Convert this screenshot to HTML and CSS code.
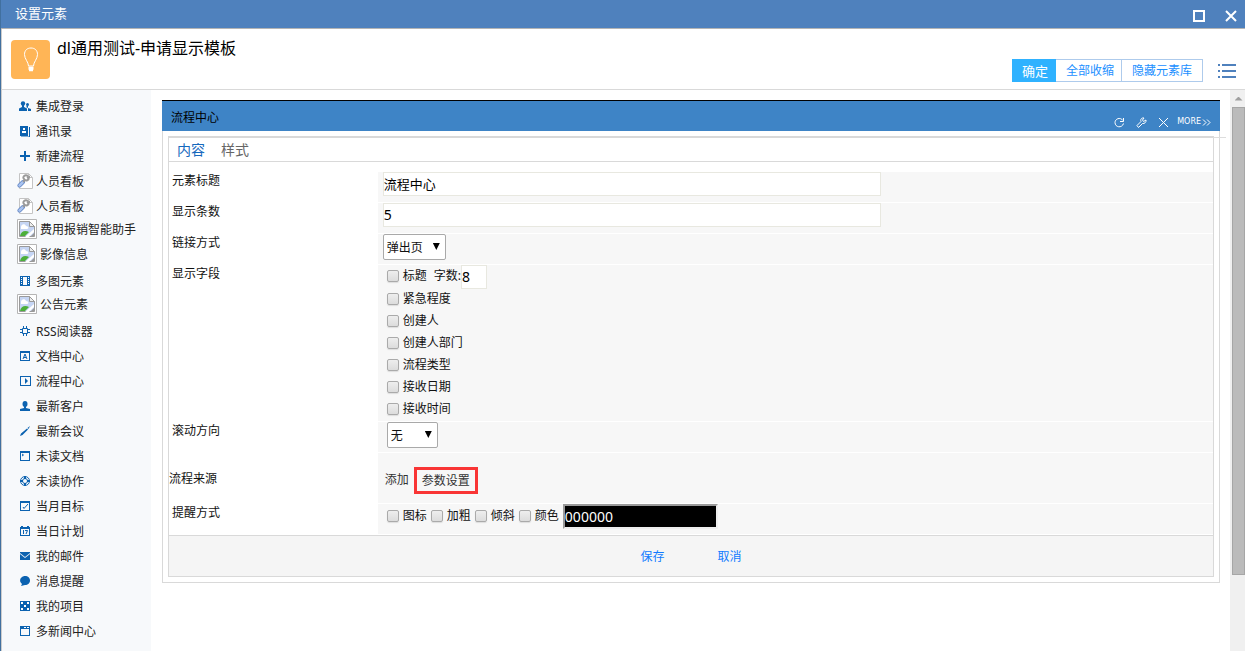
FILE: index.html
```html
<!DOCTYPE html>
<html lang="zh-CN">
<head>
<meta charset="utf-8">
<title>设置元素</title>
<link rel="stylesheet" href="styles.css">
</head>
<body>
<svg class="defs" aria-hidden="true">
  <symbol id="broken" viewBox="0 0 20 20">
    <path fill="#fff" stroke="#b5b5b5" d="M.5.5h19v19H.5z"/>
    <path fill="#c5d5f4" stroke="#9a9a9a" d="M2.500 2.500h10l5 5v10h-15z"/>
    <path fill="#fff" d="M4 8c0-3 4-4 5-1 3 0 3 3 1 3H4z"/>
    <path fill="#4caf3a" d="M3 17c1-5 5-6 9-4l-4 4z"/>
    <path fill="#fff" d="M8 18l9-8v3l-5 5z"/>
    <path fill="#eee" stroke="#999" d="M12.500 2.500v5h5z"/>
    <path fill="#999" d="M14 17l3-3v3z"/>
  </symbol>
  <symbol id="tool" viewBox="0 0 16 16">
    <path fill="#fff" stroke="#c4c4c4" d="M2.500.5h9l4 4v11h-13z"/>
    <path fill="none" stroke="#c4c4c4" d="M11.500.5v4h4"/>
    <path stroke="#5f84c4" stroke-width="4" stroke-linecap="round" d="M2.500 12.500L6 9"/>
    <path stroke="#a9c3f0" stroke-width="2.500" stroke-linecap="round" d="M2.500 12.500L6 9"/>
    <path fill="none" stroke="#9a9a9a" stroke-width="2" d="M6 9l2-2M11 3C8 1 5 4 7 6c2 3 5 1 5-2L10 5"/>
  </symbol>
</svg>
<div class="window">
  <header class="titlebar">
    <h1>设置元素</h1>
    <div class="winbtns">
      <button type="button" aria-label="最大化"><svg width="12" height="12"><path d="M1 1h10v10H1z" fill="none" stroke="#fff" stroke-width="2"/></svg></button>
      <button type="button" aria-label="关闭"><svg width="12" height="12"><path d="M1 1l10 10M11 1L1 11" stroke="#fff" stroke-width="2"/></svg></button>
    </div>
  </header>
  <div class="heading">
    <div class="logo"><svg width="16" height="26" viewBox="0 0 16 26" fill="none" stroke="#fff"><path d="M5.500 19C5.500 15 1.500 12 1.500 7.500C1.500 3.500 4 1 8 1s6.500 2.500 6.500 6.500C14.500 12 10.500 15 10.500 19z"/><path d="M5.500 20.500h5M5.500 22h5M6 23.500h4" stroke-width="1.500"/></svg></div>
    <h2>dl通用测试-申请显示模板</h2>
    <div class="actions">
      <button type="button" class="primary">确定</button><button type="button">全部收缩</button><button type="button">隐藏元素库</button>
    </div>
    <button type="button" class="menu" aria-label="菜单"><svg width="18" height="14" fill="#4f81bd"><path d="M0 0h2v2H0zM4 0h14v2H4zM0 6h2v2H0zM4 6h14v2H4zM0 12h2v2H0zM4 12h14v2H4z"/></svg></button>
  </div>
  <div class="body">
    <nav class="sidebar">
      <a href="#"><svg viewBox="0 0 12 12"><circle cx="4" cy="3.500" r="2.200"/><path d="M3 5h2v2l3 1.500V11H0V8.500L3 7z"/><circle cx="8.500" cy="4.500" r="1.500"/><path d="M8 6h1v2l3 1v2H9V8L7 7z"/></svg>集成登录</a>
      <a href="#"><svg viewBox="0 0 12 12"><path d="M1 1h8v10H1z"/><path d="M10 2h1v10H2v-.5h8z"/><path fill="#fff" d="M4 3h2v2H4zM3 6h4v2H3z"/></svg>通讯录</a>
      <a href="#"><svg viewBox="0 0 12 12"><path d="M5 1h2v4h4v2H7v4H5V7H1V5h4z"/></svg>新建流程</a>
      <a href="#" class="tool"><svg viewBox="0 0 16 16"><use href="#tool"/></svg>人员看板</a>
      <a href="#" class="tool"><svg viewBox="0 0 16 16"><use href="#tool"/></svg>人员看板</a>
      <a href="#" class="broken"><svg viewBox="0 0 20 20"><use href="#broken"/></svg>费用报销智能助手</a>
      <a href="#" class="broken"><svg viewBox="0 0 20 20"><use href="#broken"/></svg>影像信息</a>
      <a href="#"><svg viewBox="0 0 12 12"><path fill-rule="evenodd" d="M1 1h10v10H1zM4 2v8h4V2z"/><path fill="#fff" d="M2 2h1v1H2zM2 4h1v1H2zM2 6h1v1H2zM2 8h1v1H2zM9 2h1v1H9zM9 4h1v1H9zM9 6h1v1H9zM9 8h1v1H9z"/></svg>多图元素</a>
      <a href="#" class="broken"><svg viewBox="0 0 20 20"><use href="#broken"/></svg>公告元素</a>
      <a href="#"><svg viewBox="0 0 12 12"><path fill="none" stroke="#0b62b0" d="M3.500 3.500h5v5h-5zM1 4.500h2M1 7.500h2M9 4.500h2M9 7.500h2M4.500 1v2M7.500 1v2M4.500 9v2M7.500 9v2"/></svg>RSS阅读器</a>
      <a href="#"><svg viewBox="0 0 12 12"><path fill-rule="evenodd" d="M1 1h10v10H1zM2 3v7h8V3z"/><path fill="none" stroke="#0b62b0" d="M4 9l2-5 2 5M5 7.500h2"/></svg>文档中心</a>
      <a href="#"><svg viewBox="0 0 12 12"><path fill-rule="evenodd" d="M1 1h11v10H1zM2 2v8h9V2z"/><path d="M6 3l3 3-3 3z"/></svg>流程中心</a>
      <a href="#"><svg viewBox="0 0 12 12"><ellipse cx="6" cy="4" rx="2.500" ry="3"/><path d="M5 6h2v2l4 1v2H1V9l4-1z"/></svg>最新客户</a>
      <a href="#"><svg viewBox="0 0 12 12"><path d="M1 11l1-2.500 6-5 1 1-5.500 5.500zM8.500 3L11 1l-1.500 3z"/></svg>最新会议</a>
      <a href="#"><svg viewBox="0 0 12 12"><path fill-rule="evenodd" d="M1 1h10v10H1zM2 3v7h8V3z"/><path fill="none" stroke="#0b62b0" d="M3 4l1.500 1L3 6"/></svg>未读文档</a>
      <a href="#"><svg viewBox="0 0 12 12"><circle cx="6" cy="6" r="4.500" fill="none" stroke="#0b62b0"/><circle cx="6" cy="6" r="2.500" fill="none" stroke="#0b62b0"/><path stroke="#0b62b0" stroke-width="2" d="M6 1v3M6 8v3M1 6h3M8 6h3"/></svg>未读协作</a>
      <a href="#"><svg viewBox="0 0 12 12"><path fill-rule="evenodd" d="M1 1h10v10H1zM2 3v7h8V3z"/><path fill="none" stroke="#0b62b0" d="M4 7l1 1.500L9 4"/></svg>当月目标</a>
      <a href="#"><svg viewBox="0 0 12 12"><path fill-rule="evenodd" d="M1 2h1V1h2v1h4V1h2v1h1v9H1zM2 4v6h8V4z"/><path fill="none" stroke="#0b62b0" d="M4.500 5v4M6 5.500h2.500L7 9"/></svg>当日计划</a>
      <a href="#"><svg viewBox="0 0 12 12"><path d="M1 2h10v1L6 7 1 3zM1 4l5 4 5-4v6H1z"/></svg>我的邮件</a>
      <a href="#"><svg viewBox="0 0 12 12"><path d="M6 1c3 0 5 2 5 4.500S9 10 6 10l-4 1 1-2C-1 6 2 1 6 1z"/></svg>消息提醒</a>
      <a href="#"><svg viewBox="0 0 12 12"><path d="M1 1h10v10H1z"/><path fill="#fff" d="M2 2h2v2H2zM8 2h2v2H8zM5 5h2v2H5zM2 8h2v2H2zM8 8h2v2H8z"/></svg>我的项目</a>
      <a href="#"><svg viewBox="0 0 12 12"><path fill-rule="evenodd" d="M1 1h10v10H1zM2 4v6h8V4z"/><path fill="#fff" d="M5 2h2v1H5zM8 2h2v1H8z"/></svg>多新闻中心</a>
    </nav>
    <main>
      <section class="panel">
        <header class="panel-head">
          <h3>流程中心</h3>
          <div class="tools">
            <button type="button" aria-label="刷新"><svg width="11" height="11" fill="none" stroke="#fff"><path d="M9 3.500C6-.5 1 2 1 5.500c0 5 7 6 8.500 1M9.500 1v3.500H6"/></svg></button>
            <button type="button" aria-label="设置"><svg width="11" height="11" fill="none" stroke="#fff"><path d="M1 8.500l4-4C4 2 6 .5 8 1L6.500 3l1 1.500L10 3c.5 2-1.500 4-3.500 3.500l-4 4z"/></svg></button>
            <button type="button" aria-label="关闭元素"><svg width="11" height="11" stroke="#fff"><path d="M1 1l9 9M10 1L1 10"/></svg></button>
            <a href="#">MORE<svg width="9" height="7" fill="none" stroke="#fff"><path d="M1 .5l3 3-3 3M5 .5l3 3-3 3"/></svg></a>
          </div>
        </header>
        <form class="settings">
          <div class="tabs"><button type="button" class="on">内容</button><button type="button">样式</button></div>
          <div class="rows">
            <div class="row"><label for="title">元素标题</label><div class="cell"><input class="text" id="title" type="text" value="流程中心"></div></div>
            <div class="row"><label for="count">显示条数</label><div class="cell"><input class="text number" id="count" type="text" value="5"></div></div>
            <div class="row"><label for="link">链接方式</label><div class="cell"><span class="select"><select id="link"><option>弹出页</option></select></span></div></div>
            <div class="row"><span class="name">显示字段</span>
              <div class="cell fields">
                <div class="first"><label><input type="checkbox">标题</label><label class="len" for="len">字数:</label><input class="text number short" id="len" type="text" value="8"></div>
                <label><input type="checkbox">紧急程度</label>
                <label><input type="checkbox">创建人</label>
                <label><input type="checkbox">创建人部门</label>
                <label><input type="checkbox">流程类型</label>
                <label><input type="checkbox">接收日期</label>
                <label><input type="checkbox">接收时间</label>
              </div>
            </div>
            <div class="row"><label for="scroll">滚动方向</label><div class="cell indent"><span class="select small"><select id="scroll"><option>无</option></select></span></div></div>
            <div class="row source"><span class="name">流程来源</span><div class="cell"><a href="#">添加</a><a href="#" class="marked">参数设置</a></div></div>
            <div class="row"><span class="name">提醒方式</span>
              <div class="cell indent remind">
                <label><input type="checkbox">图标</label>
                <label><input type="checkbox">加粗</label>
                <label><input type="checkbox">倾斜</label>
                <label><input type="checkbox">颜色</label>
                <input class="color" type="text" value="000000" aria-label="颜色值">
              </div>
            </div>
          </div>
          <div class="foot"><button type="submit">保存</button><button type="button">取消</button></div>
        </form>
      </section>
    </main>
    <div class="scrollbar" aria-hidden="true"><i class="up"></i><i class="thumb"></i><i class="rest"></i></div>
  </div>
</div>
</body>
</html>
```
FILE: styles.css
```css
* { box-sizing: border-box; }
body {
  margin: 0;
  background: #fff;
  color: #111;
  font: 12px/18px "Noto Sans", "Noto Sans CJK SC", sans-serif;
}
h1, h2, h3 { margin: 0; font-weight: 400; }
button, input, select { font-family: inherit; color: inherit; }
button { border: 0; padding: 0; background: none; cursor: pointer; }
a { color: inherit; text-decoration: none; }
svg { display: block; flex: none; }
.defs { position: absolute; width: 0; height: 0; }

.window {
  height: 100vh;
  display: flex;
  flex-direction: column;
  overflow: hidden;
  border-left: 1px solid #41709f;
}
.titlebar {
  flex: none;
  display: flex;
  justify-content: space-between;
  height: 29px;
  padding: 0 8px 0 14px;
  background: #4f81bd;
  border-bottom: 1px solid #b4b4b4;
  color: #fff;
}
.titlebar h1 { font-size: 13px; line-height: 26px; }
.winbtns { display: flex; gap: 20px; padding-top: 4px; align-items: center; }

.heading {
  flex: none;
  display: flex;
  height: 61px;
  padding: 0 9px;
  border-left: 1px solid #ccc;
  border-bottom: 1px solid #d9d9d9;
}
.logo {
  width: 39px;
  height: 39px;
  margin-top: 11px;
  display: grid;
  place-items: center;
  background: #ffb556;
  border-radius: 4px;
}
.heading h2 { flex: 1; padding-left: 7px; font-size: 16px; line-height: 38px; color: #000; }
.actions { display: flex; margin-top: 30px; height: 23px; }
.actions button {
  padding: 0 7px 0 10px;
  border: 1px solid #aecbec;
  border-left: 0;
  font-size: 12px;
  line-height: 22px;
  color: #1b8fff;
}
.actions button:last-child { padding-right: 10px; }
.actions .primary { background: #2fb2ff; border-color: #2fb2ff; color: #fff; font-size: 13px; }
.menu { height: 14px; margin: 35px 0 0 15px; }

.body { flex: 1; min-height: 0; display: flex; border-left: 1px solid #ccc; }
.sidebar { flex: none; width: 149px; padding: 4px 0 0 15px; background: #f7f9fb; overflow: hidden; color: #222; }
.sidebar a { display: flex; align-items: center; gap: 5px; height: 25px; padding-left: 2px; white-space: nowrap; }
.sidebar svg { width: 12px; height: 12px; margin-bottom: 1px; fill: #0b62b0; }
.sidebar .tool { gap: 3px; padding-left: 0; }
.sidebar .tool svg { width: 16px; height: 16px; }
.sidebar .broken { gap: 3px; padding: 0 0 4px; }
.sidebar .broken svg { width: 20px; height: 20px; margin-bottom: 2px; }

main { flex: 1; min-width: 0; padding: 10px 10px 0 11px; }
.panel { border: 1px solid #d9d9d9; border-top: 0; padding-bottom: 5px; }
.panel-head {
  display: flex;
  justify-content: space-between;
  height: 31px;
  margin: 0 -1px 5px;
  padding: 0 9px;
  background: #3e84c6;
  border-top: 1px solid #000;
}
.panel-head h3 { font-size: 12px; line-height: 34px; color: #000; }
.tools { display: flex; align-items: center; gap: 11px; padding-top: 12px; }
.tools a { display: flex; align-items: center; gap: 1px; margin-left: -3px; color: #fff; font: 8px/10px "DejaVu Sans", sans-serif; }

.settings { position: relative; margin: 0 5px; border: 1px solid #d9d9d9; border-top-width: 2px; }
.settings::after {
  content: "";
  position: absolute;
  left: 100%;
  top: -1px;
  width: 13px;
  border-top: 1px solid #ddd;
}
.tabs { display: flex; gap: 16px; height: 24px; padding-left: 8px; border-bottom: 1px solid #d9d9d9; }
.tabs button { font-size: 14px; line-height: 22px; color: #666; }
.tabs .on { color: #1568bd; }
.rows { padding-top: 10px; }
.row { display: grid; grid-template-columns: 20% 1fr; min-height: 31px; }
.row > label, .name { padding-left: 3px; }
.cell { background: #f7f7f7; border-bottom: 1px solid #fff; padding-left: 5px; }
.indent { padding-left: 9px; }
.text {
  display: block;
  width: 60%;
  height: 24px;
  padding: 0 0 2px;
  border: 1px solid #e8e8e0;
  background: #fff;
  font-size: 13px;
  color: #000;
}
.number { font-size: 14px; }
.short { width: 26px; }
.select { position: relative; display: block; width: 63px; }
.small { width: 51px; }
.select::after {
  content: "";
  position: absolute;
  right: 6px;
  top: 9px;
  width: 7px;
  height: 7px;
  background: #000;
  clip-path: polygon(0 0, 100% 0, 50% 100%);
  pointer-events: none;
}
select {
  display: block;
  appearance: none;
  width: 100%;
  height: 26px;
  padding: 0 3px;
  border: 1px solid #a9a9a9;
  border-radius: 2px;
  background: #fff;
  font-size: 12px;
}
.cell label { display: flex; align-items: center; gap: 4px; height: 22px; }
.fields { padding-left: 9px; }
.first { display: flex; height: 23px; }
.first .len { padding-left: 7px; }
input[type="checkbox"] {
  appearance: none;
  width: 12px;
  height: 12px;
  margin: 0;
  border: 1px solid #aaa;
  border-radius: 2px;
  background: linear-gradient(#eee, #dcdcdc);
  box-shadow: 0 1px 1px #ddd;
}
.row:has(.fields) { min-height: 157px; }
.source { min-height: 51px; }
.source .name { padding-left: 0; align-self: center; }
.source .cell { display: flex; align-items: center; gap: 5px; padding: 4px 0 0 7px; color: #333; }
.marked { border: 3px solid #f93535; padding: 0 5px; line-height: 21px; }
.remind { display: flex; gap: 4px; }
.remind label { height: 24px; }
.color { width: 155px; height: 25px; padding: 0; border: 2px inset #eee; background: #000; color: #fff; font-size: 14px; }
.foot {
  display: flex;
  justify-content: center;
  gap: 53px;
  height: 41px;
  background: #f5f5f5;
  border-top: 1px solid #d9d9d9;
}
.foot button { font-size: 12px; color: #117bff; }

.scrollbar { flex: none; width: 15px; display: flex; flex-direction: column; background: #f0f0f0; padding-left: 2px; }
.up { height: 17px; display: grid; place-items: center; }
.up::after { content: ""; width: 8px; height: 4px; background: #a0a0a0; clip-path: polygon(50% 0, 100% 100%, 0 100%); }
.thumb { flex: 468; background: #bbb; border: 1px solid #a6a6a6; }
.rest { flex: 76; }
```
